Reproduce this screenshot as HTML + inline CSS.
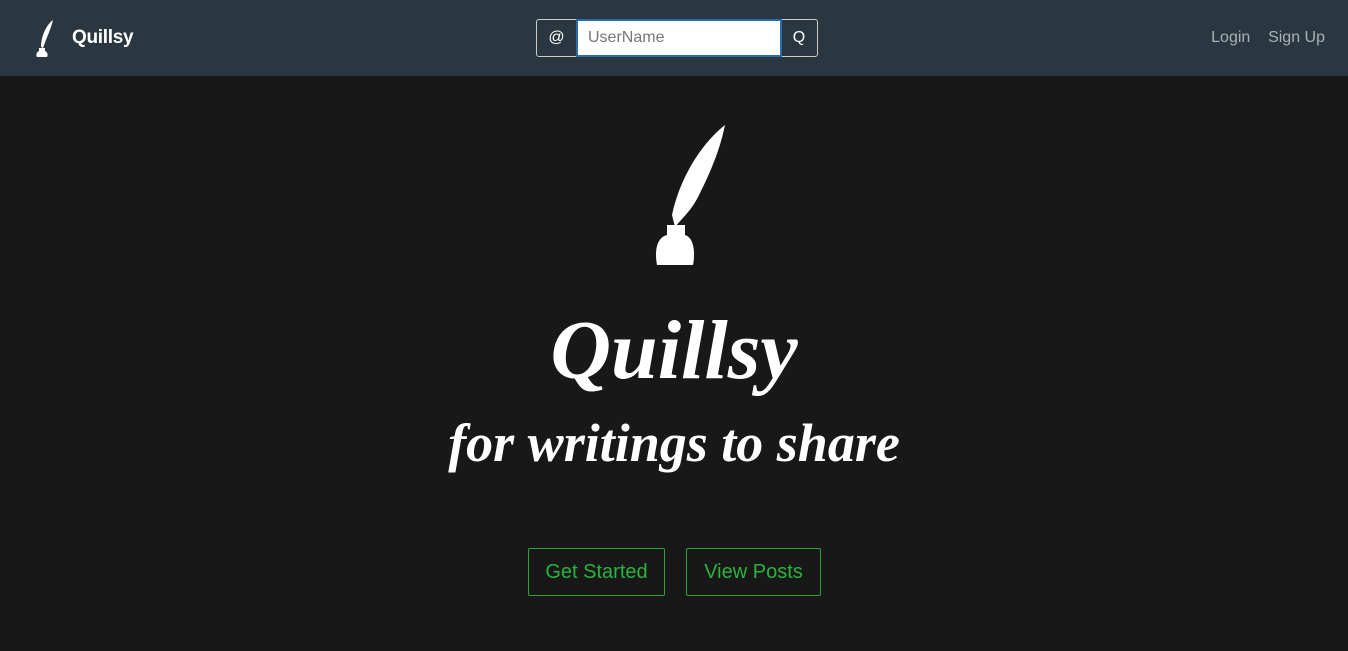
<!DOCTYPE html>
<html><head><style>
body{margin:0;width:1348px;height:651px;background:#181818;font-family:"Liberation Sans",sans-serif;overflow:hidden;position:relative}
.nav{position:absolute;left:0;top:0;width:1348px;height:76px;background:#2a3740}
.brand{position:absolute;left:72px;top:27px;color:#fff;font-weight:bold;font-size:19px;letter-spacing:-0.3px}
.grp{position:absolute;left:536px;top:19px;width:280px;height:36px;border:1px solid #ccc;border-radius:3px}
.at{position:absolute;left:0;top:0;width:39px;height:36px;color:#fff;font-size:16px;line-height:36px;text-align:center}
.inp{position:absolute;left:39px;top:-1px;height:34px;background:#fff;border:2px solid #2a6cb0;color:#777;font-size:16px;line-height:34px;padding-left:10px;box-sizing:content-box;width:192px}
.q{position:absolute;right:0;top:0;width:36px;height:36px;color:#fff;font-size:16px;line-height:36px;text-align:center}
.links{position:absolute;right:23px;top:29px;color:#a8b0b5;font-size:16px}
.t1{position:absolute;left:0;width:1348px;top:302px;text-align:center;color:#fff;font-family:"Liberation Serif",serif;font-style:italic;font-weight:bold;font-size:84px}
.t2{position:absolute;left:0;width:1348px;top:412px;text-align:center;color:#fff;font-family:"Liberation Serif",serif;font-style:italic;font-weight:bold;font-size:54px}
.btn{position:absolute;top:548px;height:46px;border:1px solid #2aa33a;border-radius:2px;color:#2bb33d;font-size:20px;line-height:46px;text-align:center}
</style></head><body>
<div class="nav">
<svg style="position:absolute;left:33px;top:19px" width="22" height="38" viewBox="0 0 22 38"><path d="M20 1C13 6 8 18 8 28L10 29C13 20 18 10 20 1Z" fill="#fff"/><path d="M6 29h6v3c3 1 3 5 2 6H4c-1-1-1-5 2-6z" fill="#fff"/></svg>
<div class="brand">Quillsy</div>
<div class="grp"><div class="at">@</div><div class="inp">UserName</div><div class="q">Q</div></div>
<div class="links">Login&nbsp;&nbsp;&nbsp;&nbsp;Sign Up</div>
</div>
<svg style="position:absolute;left:630px;top:115px" width="110" height="160" viewBox="0 0 110 160"><path d="M95 10C72 28 50 62 42 100L45 112C55 100 62 95 70 78C80 58 90 35 95 10Z" fill="#fff"/><path d="M37 110h18v10c10 3 10 20 8 30H27c-2-10-2-27 10-30z" fill="#fff"/></svg>
<div class="t1">Quillsy</div>
<div class="t2">for writings to share</div>
<div class="btn" style="left:528px;width:135px">Get Started</div>
<div class="btn" style="left:686px;width:133px">View Posts</div>
</body></html>
